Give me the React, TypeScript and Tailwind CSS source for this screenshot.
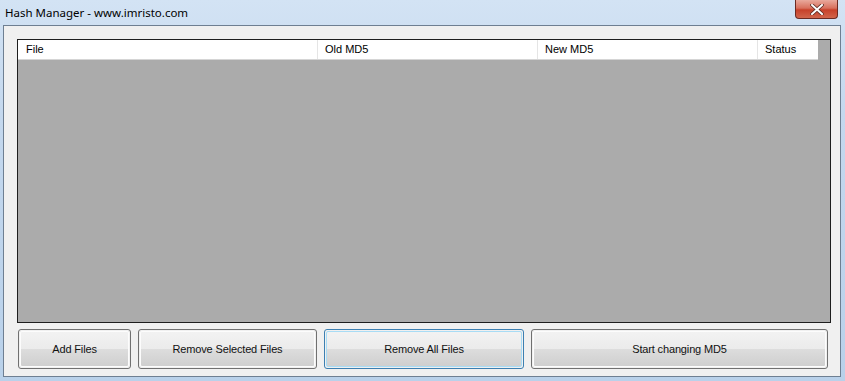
import React from "react";

function WinButton({ label, width, focused }: { label: string; width: string; focused?: boolean }) {
  return (
    <div
      className={`${width} h-[40px] rounded-[3px] border ${
        focused ? "border-[#3c7fb1]" : "border-[#707070]"
      } p-[1px]`}
    >
      <div
        className={`h-full w-full rounded-[2px] border ${
          focused ? "border-[#a8dcf5]" : "border-[#fcfcfc]"
        } bg-[linear-gradient(to_bottom,#f2f2f2_0%,#ebebeb_50%,#dddddd_50%,#cfcfcf_100%)] flex items-center justify-center text-[11px] tracking-[-0.15px] text-[#111]`}
      >
        {label}
      </div>
    </div>
  );
}

export default function App() {
  return (
    <div
      className="w-[845px] h-[381px] flex flex-col bg-[linear-gradient(to_bottom,#d3e3f4_0%,#c4d8ee_30%,#b9d1ea_100%)] overflow-hidden"
      style={{ fontFamily: '"Liberation Sans", Arial, sans-serif' }}
    >
      <div className="h-[25px] flex items-start justify-between shrink-0">
        <div
          className="pl-[5px] pt-[5px] text-[11.5px] leading-[15px] text-black"
          style={{ fontFamily: '"Noto Sans", "Open Sans", sans-serif' }}
        >
          Hash Manager - www.imristo.com
        </div>
        <div className="mr-[7px] w-[43px] h-[19px] rounded-b-[4px] border border-t-0 border-[#6b2a22] bg-[linear-gradient(to_bottom,#e9a99c_0%,#d8705d_45%,#c7412a_55%,#d1654c_100%)] flex items-center justify-center">
          <svg width="14" height="11" viewBox="0 0 14 11">
            <path
              d="M2 1 L12 10 M12 1 L2 10"
              stroke="#5b2a22"
              strokeWidth="3.6"
              strokeLinecap="square"
            />
            <path
              d="M2 1 L12 10 M12 1 L2 10"
              stroke="#ffffff"
              strokeWidth="2"
              strokeLinecap="square"
            />
          </svg>
        </div>
      </div>
      <div className="ml-[3px] w-[838px] h-[352px] border border-[#6e7f92] bg-[#f0f0f0] shrink-0 flex flex-col pl-[13px] pt-[13px]">
        <div className="w-[814px] h-[284px] border border-[#1e1e1e] bg-[#ababab] flex flex-col">
          <div className="w-[800px] h-[20px] bg-white border-b border-[#d5d5d5] flex text-[11px] text-black">
            <div className="w-[300px] border-r border-[#e5e5e5] pl-[8px] flex items-center">File</div>
            <div className="w-[220px] border-r border-[#e5e5e5] pl-[7px] flex items-center">Old MD5</div>
            <div className="w-[220px] border-r border-[#e5e5e5] pl-[7px] flex items-center">New MD5</div>
            <div className="w-[60px] pl-[7px] flex items-center">Status</div>
          </div>
        </div>
        <div className="flex mt-[6px] ml-[1px] gap-[7px]">
          <WinButton label="Add Files" width="w-[113px]" />
          <WinButton label="Remove Selected Files" width="w-[179px]" />
          <WinButton label="Remove All Files" width="w-[200px]" focused />
          <WinButton label="Start changing MD5" width="w-[297px]" />
        </div>
      </div>
    </div>
  );
}
